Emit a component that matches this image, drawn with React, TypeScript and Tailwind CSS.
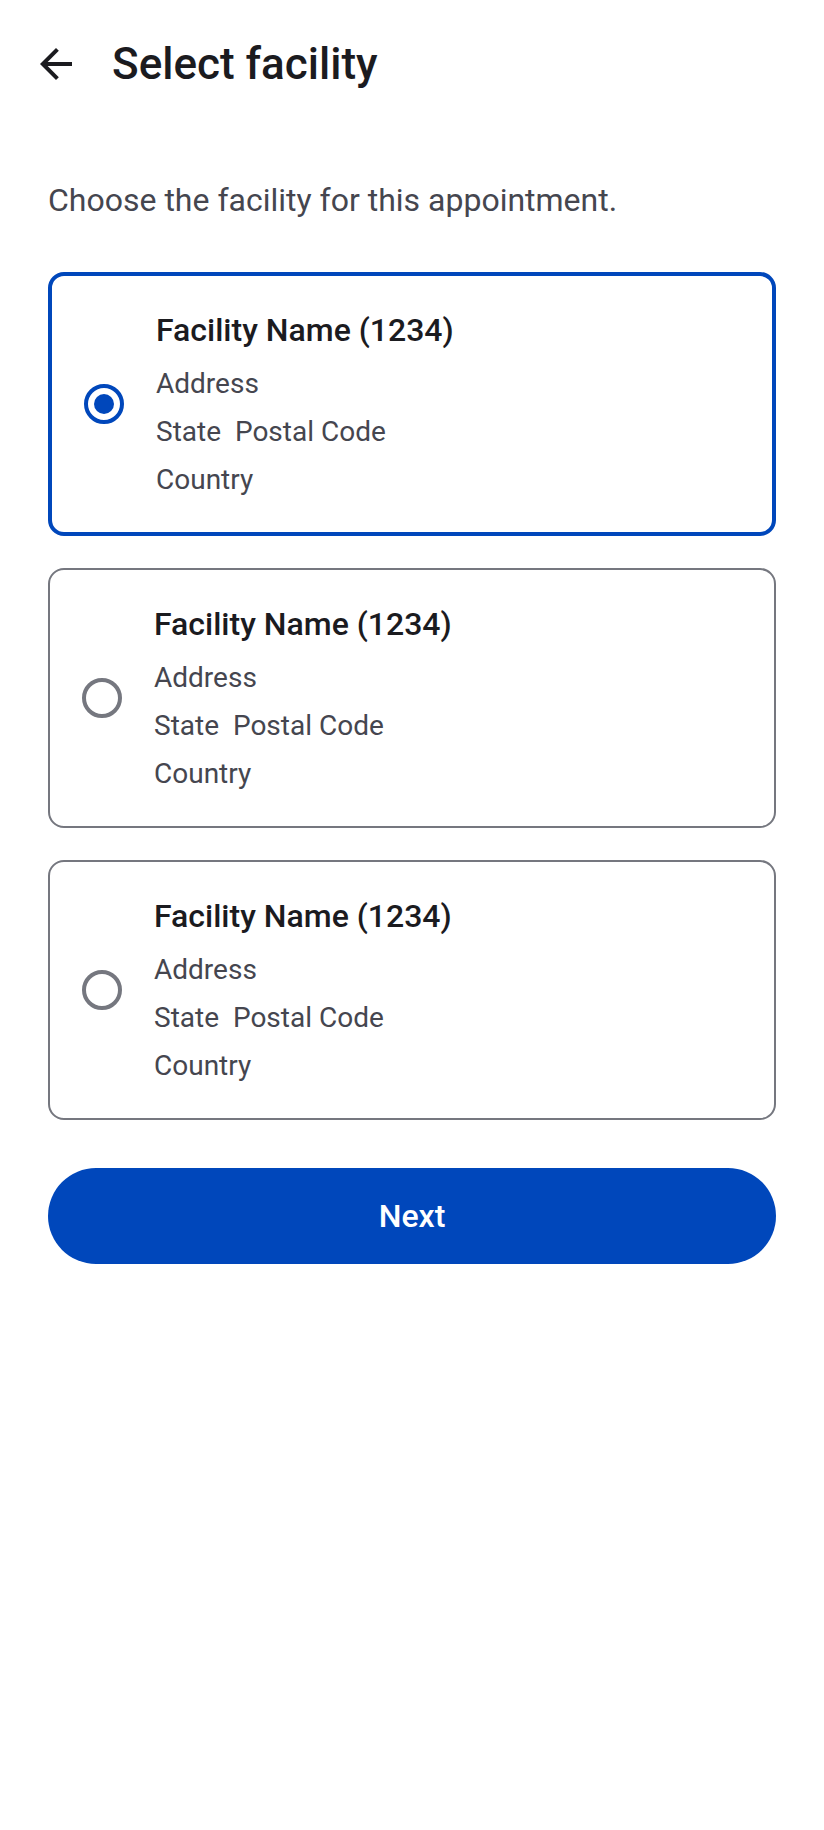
const facilities = [
  { id: 1, name: 'Facility Name (1234)', address: 'Address', region: 'State\u00a0\u00a0Postal Code', country: 'Country' },
  { id: 2, name: 'Facility Name (1234)', address: 'Address', region: 'State\u00a0\u00a0Postal Code', country: 'Country' },
  { id: 3, name: 'Facility Name (1234)', address: 'Address', region: 'State\u00a0\u00a0Postal Code', country: 'Country' },
]

function BackArrow() {
  return (
    <svg viewBox="0 0 24 24" className="w-12 h-12" fill="#1b1b1f">
      <path d="M20 11H7.83l5.59-5.59L12 4l-8 8 8 8 1.41-1.41L7.83 13H20v-2z" />
    </svg>
  )
}

function Radio({ checked }: { checked: boolean }) {
  return (
    <div
      className={`w-10 h-10 shrink-0 rounded-full border-4 flex items-center justify-center ${
        checked ? 'border-[#0047bb]' : 'border-[#75777f]'
      }`}
    >
      {checked && <div className="w-5 h-5 rounded-full bg-[#0047bb]" />}
    </div>
  )
}

export default function App() {
  const selected = 1

  return (
    <div className="min-h-screen bg-white font-['Roboto',sans-serif]">
      {/* Top bar */}
      <header className="h-[128px] flex items-center pl-8">
        <button className="w-12 h-12 flex items-center justify-center">
          <BackArrow />
        </button>
        <h1 className="ml-8 text-[44px] leading-[56px] text-[#1b1b1f] font-medium">Select facility</h1>
      </header>

      <main className="px-12 pt-12">
        <p className="text-[32px] leading-[48px] text-[#45464f]">Choose the facility for this appointment.</p>

        {/* Facility list */}
        <div className="mt-12 flex flex-col gap-8">
          {facilities.map((f) => {
            const checked = f.id === selected
            return (
              <div
                key={f.id}
                className={`rounded-2xl p-8 flex items-center ${
                  checked ? 'border-4 border-[#0047bb]' : 'border-2 border-[#75777f]'
                }`}
              >
                <Radio checked={checked} />
                <div className="ml-8 flex flex-col gap-2">
                  <div className="text-[32px] leading-[44px] font-medium text-[#1b1b1f]">{f.name}</div>
                  <div className="text-[28px] leading-[40px] text-[#45464f] mt-1">{f.address}</div>
                  <div className="text-[28px] leading-[40px] text-[#45464f]">{f.region}</div>
                  <div className="text-[28px] leading-[40px] text-[#45464f]">{f.country}</div>
                </div>
              </div>
            )
          })}
        </div>

        <button className="mt-12 w-full h-24 rounded-full bg-[#0047bb] text-white text-[32px] font-medium">
          Next
        </button>
      </main>
    </div>
  )
}
